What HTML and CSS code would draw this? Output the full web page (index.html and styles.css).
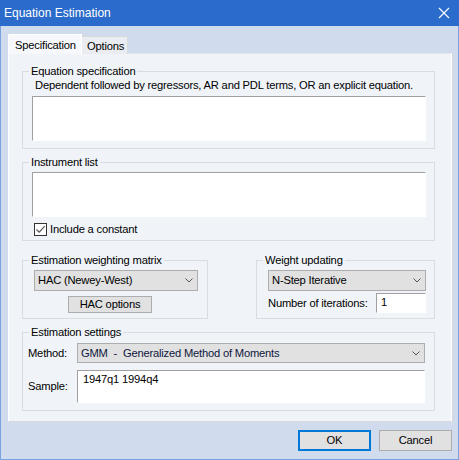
FILE: index.html
```html
<!DOCTYPE html>
<html>
<head>
<meta charset="utf-8">
<link rel="stylesheet" href="styles.css">
</head>
<body>
<div class="window">
  <div class="titlebar">
    <span class="title">Equation Estimation</span>
    <svg class="close" width="12" height="12" viewBox="0 0 12 12"><path d="M1 1 L11 11 M11 1 L1 11" stroke="#fff" stroke-width="1.1" fill="none"/></svg>
  </div>
  <div class="body">
    <div class="tabs">
      <div class="tab active">Specification</div>
      <div class="tab">Options</div>
    </div>
    <div class="panel">
      <fieldset class="grp g1">
        <legend>Equation specification</legend>
        <div class="hint">Dependent followed by regressors, AR and PDL terms, OR an explicit equation.</div>
        <div class="edit ta"></div>
      </fieldset>
      <fieldset class="grp g2">
        <legend>Instrument list</legend>
        <div class="edit ta ta2"></div>
        <div class="check">
          <span class="box"><svg width="11" height="11" viewBox="0 0 11 11"><path d="M1.5 5.5 L4.2 8.2 L9.8 2.2" stroke="#555" stroke-width="1.2" fill="none"/></svg></span>
          <span>Include a constant</span>
        </div>
      </fieldset>
      <div class="row">
        <fieldset class="grp g3">
          <legend>Estimation weighting matrix</legend>
          <div class="combo c3"><span>HAC (Newey-West)</span><svg class="chev" width="8" height="5" viewBox="0 0 8 5"><path d="M0.5 0.5 L4 4 L7.5 0.5" stroke="#555" fill="none"/></svg></div>
          <div class="btn hac">HAC options</div>
        </fieldset>
        <fieldset class="grp g4">
          <legend>Weight updating</legend>
          <div class="combo c4"><span>N-Step Iterative</span><svg class="chev" width="8" height="5" viewBox="0 0 8 5"><path d="M0.5 0.5 L4 4 L7.5 0.5" stroke="#555" fill="none"/></svg></div>
          <div class="iter">
            <span>Number of iterations:</span>
            <div class="edit num">1</div>
          </div>
        </fieldset>
      </div>
      <fieldset class="grp g5">
        <legend>Estimation settings</legend>
        <div class="frow method">
          <span class="lbl">Method:</span>
          <div class="combo c5"><span class="navy">GMM&nbsp; -&nbsp; Generalized Method of Moments</span><svg class="chev" width="8" height="5" viewBox="0 0 8 5"><path d="M0.5 0.5 L4 4 L7.5 0.5" stroke="#555" fill="none"/></svg></div>
        </div>
        <div class="frow sample">
          <span class="lbl">Sample:</span>
          <div class="edit smp">1947q1 1994q4</div>
        </div>
      </fieldset>
    </div>
    <div class="buttons">
      <div class="btn dlg ok">OK</div>
      <div class="btn dlg">Cancel</div>
    </div>
  </div>
</div>
</body>
</html>
```
FILE: styles.css
```css
* { box-sizing: border-box; }
html, body { margin: 0; padding: 0; }
body {
  font-family: "Liberation Sans", Arial, sans-serif;
  font-size: 11.2px;
  letter-spacing: -0.2px;
  line-height: 15px;
  color: #000;
  background: #d0dcee;
  white-space: nowrap;
}
.window {
  width: 459px;
  height: 460px;
  display: flex;
  flex-direction: column;
  background: #d0dcee;
  overflow: hidden;
}
.titlebar {
  height: 26px;
  flex-shrink: 0;
  background: #2b6bcb;
  color: #fff;
  display: flex;
  align-items: center;
  padding: 1px 0 0 4px;
}
.title { flex: 1; font-size: 12px; letter-spacing: 0; }
.close { margin-right: 9px; margin-top: -1px; }
.body {
  flex: 1;
  border: 1px solid #7ba2de;
  border-top: none;
  padding: 8px 0 0 7px;
}
.tabs {
  display: flex;
  align-items: flex-end;
  height: 20px;
  margin-bottom: -1px;
}
.tab {
  flex-shrink: 0;
  height: 18px;
  padding: 2px 0 0 5px;
  background: #e9ecf0;
  border: 1px solid #d9d9d9;
  border-bottom: none;
  border-left: none;
  width: 46px;
}
.tab.active {
  position: relative;
  z-index: 1;
  height: 20px;
  width: 74px;
  padding: 3px 0 0 6px;
  background: #f6f8fb;
  border: 1px solid #ffffff;
  border-bottom: none;
}
.panel {
  width: 444px;
  background: #f0f4f9;
  border: 1px solid #e3e6ea;
  border-left-color: #fff;
  border-bottom-color: #d9d9d9;
  border-right-color: #fff;
  box-shadow: 1px 0 0 #d6d8dc;
  padding: 10px 16px 10px 13px;
}
.grp {
  margin: 0;
  padding: 0;
  border: 1px solid #d9dce0;
  min-width: 0;
}
.grp legend {
  margin-left: 6px;
  padding: 0 2px;
  line-height: 15px;
}
.edit {
  background: #fff;
  border: 1px solid #fff;
  border-top-color: #a0a0a0;
  border-left-color: #a0a0a0;
}
.g1 { padding-bottom: 7px; }
.hint { margin: -1px 0 0 12px; }
.ta { margin: 3px 0 0 9px; width: 394px; height: 45px; }
.g2 { margin-top: 6px; padding-bottom: 2px; }
.ta2 { margin-top: 2px; }
.check {
  display: flex;
  align-items: center;
  height: 17px;
  margin: 4px 0 0 11px;
}
.box {
  width: 13px;
  height: 13px;
  border: 1px solid #333;
  background: #fff;
  display: flex;
  align-items: center;
  justify-content: center;
  margin-right: 3px;
}
.row {
  display: flex;
  justify-content: space-between;
  margin-top: 12px;
}
.g3 { width: 186px; padding-bottom: 5px; }
.g4 { width: 179px; padding-bottom: 5px; }
.combo {
  display: flex;
  align-items: center;
  justify-content: space-between;
  background: #e1e1e1;
  border: 1px solid #adadad;
  padding: 0 4px 0 3px;
}
.navy { color: #101840; }
.c3 { margin: 2px 0 0 11px; width: 164px; height: 21px; }
.c4 { margin: 2px 0 0 11px; width: 158px; height: 21px; }
.btn {
  display: flex;
  align-items: center;
  justify-content: center;
  background: #e1e1e1;
  border: 1px solid #adadad;
}
.hac { margin: 5px 0 0 45px; width: 84px; height: 17px; }
.iter {
  display: flex;
  align-items: center;
  justify-content: space-between;
  margin: 2px 0 0 11px;
  width: 158px;
}
.num { width: 50px; height: 20px; padding: 1px 0 0 4px; }
.g5 { margin-top: 6px; padding-bottom: 7px; }
.frow {
  display: flex;
  align-items: center;
}
.lbl { width: 49px; margin-left: 5px; }
.method { margin-top: 3px; }
.c5 { width: 348px; height: 20px; }
.sample { margin-top: 7px; }
.smp { width: 348px; height: 33px; padding: 1px 0 0 5px; }
.buttons {
  display: flex;
  justify-content: flex-end;
  gap: 8px;
  margin-top: 8px;
  padding-right: 6px;
}
.dlg { width: 73px; height: 21px; }
.ok { border: 2px solid #0078d7; }
```
